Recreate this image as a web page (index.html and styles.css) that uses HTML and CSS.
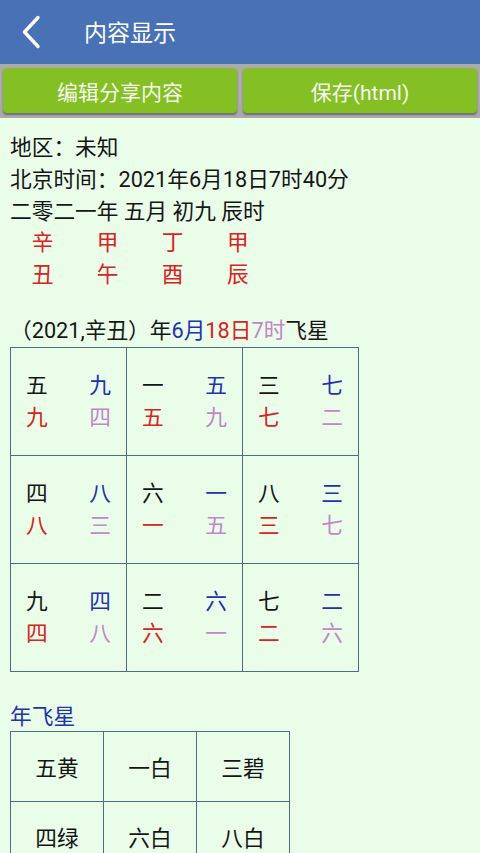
FILE: index.html
```html
<!DOCTYPE html>
<html lang="zh-CN">
<head>
<meta charset="utf-8">
<title>内容显示</title>
<link rel="stylesheet" href="styles.css">
</head>
<body>
<header class="appbar">
  <svg class="back" width="24" height="40" viewBox="0 0 24 40" aria-hidden="true">
    <path d="M18 5.5 L4.5 20 L18 34.5" fill="none" stroke="#ffffff" stroke-width="3.4" stroke-linecap="round" stroke-linejoin="round"/>
  </svg>
  <h1 class="title">内容显示</h1>
</header>
<div class="toolbar">
  <button class="btn">编辑分享内容</button>
  <button class="btn">保存(html)</button>
</div>
<main class="content">
  <div class="line">地区：未知</div>
  <div class="line">北京时间：2021年6月18日7时40分</div>
  <div class="line">二零二一年 五月 初九 辰时</div>
  <div class="bazi">
    <div class="line red">　辛　　甲　　丁　　甲</div>
    <div class="line red">　丑　　午　　酉　　辰</div>
  </div>
  <div class="line caption">（2021,辛丑）年<span class="blue">6月</span><span class="red">18日</span><span class="purple">7时</span>飞星</div>
  <table class="grid9">
    <tr>
      <td><div class="r"><span>五</span><span class="blue">九</span></div><div class="r"><span class="red">九</span><span class="purple">四</span></div></td>
      <td><div class="r"><span>一</span><span class="blue">五</span></div><div class="r"><span class="red">五</span><span class="purple">九</span></div></td>
      <td><div class="r"><span>三</span><span class="blue">七</span></div><div class="r"><span class="red">七</span><span class="purple">二</span></div></td>
    </tr>
    <tr>
      <td><div class="r"><span>四</span><span class="blue">八</span></div><div class="r"><span class="red">八</span><span class="purple">三</span></div></td>
      <td><div class="r"><span>六</span><span class="blue">一</span></div><div class="r"><span class="red">一</span><span class="purple">五</span></div></td>
      <td><div class="r"><span>八</span><span class="blue">三</span></div><div class="r"><span class="red">三</span><span class="purple">七</span></div></td>
    </tr>
    <tr>
      <td><div class="r"><span>九</span><span class="blue">四</span></div><div class="r"><span class="red">四</span><span class="purple">八</span></div></td>
      <td><div class="r"><span>二</span><span class="blue">六</span></div><div class="r"><span class="red">六</span><span class="purple">一</span></div></td>
      <td><div class="r"><span>七</span><span class="blue">二</span></div><div class="r"><span class="red">二</span><span class="purple">六</span></div></td>
    </tr>
  </table>
  <div class="section blue">年飞星</div>
  <table class="year">
    <tr><td>五黄</td><td>一白</td><td>三碧</td></tr>
    <tr><td>四绿</td><td>六白</td><td>八白</td></tr>
  </table>
</main>
</body>
</html>
```
FILE: styles.css
```css
html, body {
  margin: 0;
  padding: 0;
}
body {
  background: #e9fde9;
  font-family: Roboto, "Noto Sans CJK SC", sans-serif;
  color: #151515;
  overflow: hidden;
}
.appbar {
  height: 64px;
  background: #4872b5;
  display: flex;
  align-items: center;
}
.back {
  margin-left: 20px;
  display: block;
}
.title {
  margin: 3px 0 0 40px;
  font-size: 23px;
  font-weight: normal;
  color: #ffffff;
  line-height: 1;
}
.toolbar {
  background: #ababab;
  padding: 4px 3px 5px 3px;
  display: flex;
  gap: 6px;
}
.btn {
  flex: 1;
  height: 45px;
  border: none;
  border-radius: 4px;
  background: #84c023;
  color: #f6faee;
  font-family: Roboto, "Noto Sans CJK SC", sans-serif;
  font-size: 21px;
  padding: 0;
  box-shadow: 0 2px 2px rgba(60, 60, 60, 0.55);
}
.content {
  padding: 14px 10px 0 10px;
  font-size: 21.7px;
}
.line {
  line-height: 32px;
  white-space: pre;
}
.bazi {
  margin-top: -1px;
}
.caption {
  margin-top: 24px;
}
.red { color: #d92222; }
.blue { color: #2331b0; }
.purple { color: #c286ca; }
.grid9, .year {
  border-collapse: collapse;
  table-layout: fixed;
}
.grid9 td, .year td {
  border: 1px solid #4f6d82;
  padding: 0;
}
.grid9 td {
  width: 116px;
  height: 108px;
  padding: 0 15px;
  box-sizing: border-box;
}
.grid9 .r {
  display: flex;
  justify-content: space-between;
  line-height: 32px;
}
.section {
  margin-top: 31px;
  line-height: 28px;
}
.year td {
  width: 93px;
  height: 70px;
  text-align: center;
  box-sizing: border-box;
}
```
